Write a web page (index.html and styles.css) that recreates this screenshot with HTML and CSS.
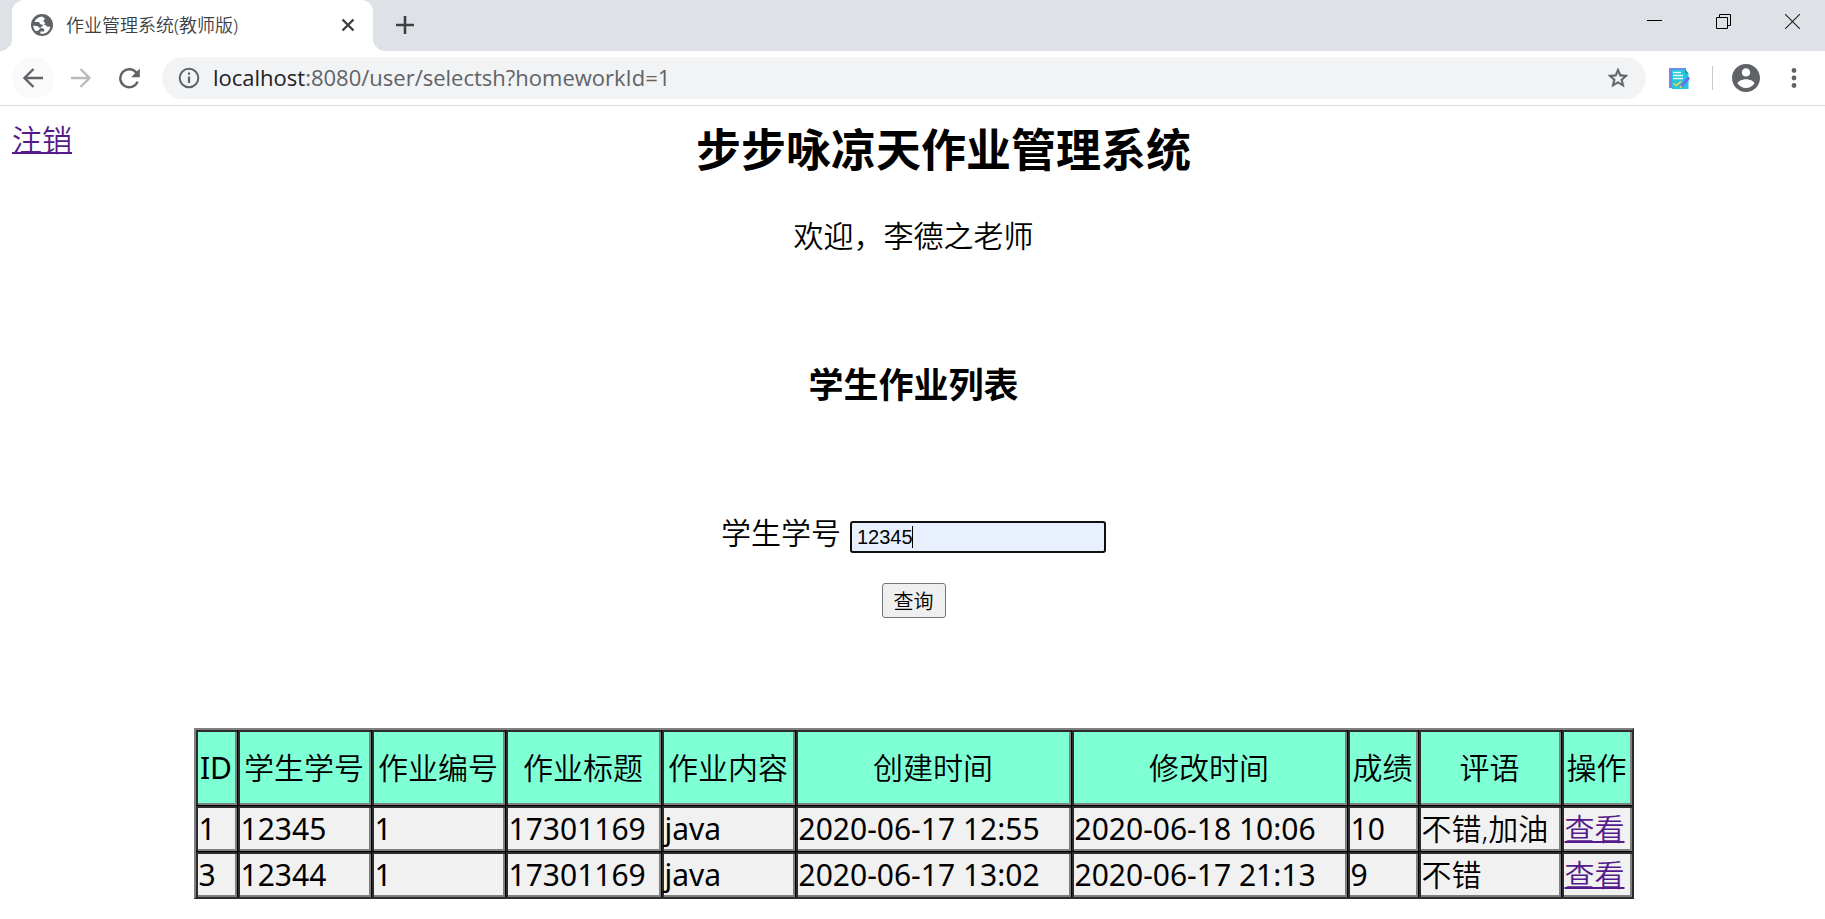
FILE: index.html
```html
<!DOCTYPE html>
<html lang="zh-CN">
<head>
<meta charset="utf-8">
<title>作业管理系统(教师版)</title>
<link rel="stylesheet" href="styles.css">
</head>
<body>
<header class="browser">
  <div class="tabbar">
    <div class="tab">
      <svg class="favicon" viewBox="0 0 24 24" aria-hidden="true"><circle cx="12" cy="12" r="12" fill="#5f6368"/><path d="M12.500 2.600C8 3 4.800 5.400 3.800 8.600h4.400c1.200 0 1.600 3 3.600 3h3.400c1.400 0 1.600 2.400 3 2.400h3c-.400 2-1.400 3.600-2.800 5-1.400 1.300-3.400 2.300-5.400 2.600H10.200v-2.600h3c.800 0 1.300-.600 1.300-1.400 0-1.500-1-2.100-2.300-2.100H9.800C8.600 13.500 6 12.600 2.300 12.800c.300 2 1 3.800 2.200 5.200 1.400 1 2.600.800 3.700-.200 1-.900 1.600-1.500 1.600-2.300l5.800-5.300c0-1.200-2.100-1.200-2.100-2.600 0-1.400 1.500-1.200 1.500-2.500S12.500 3.800 12.500 2.600z" fill="#fff"/></svg>
      <span class="tab-title">作业管理系统(教师版)</span>
      <button class="plain tab-close" aria-label="关闭标签页"><svg width="14" height="14" viewBox="0 0 14 14"><path d="M1.500 1.500l11 11M12.500 1.500l-11 11" stroke="#3c4043" stroke-width="2.400"/></svg></button>
    </div>
    <button class="plain new-tab" aria-label="新标签页"><svg width="18" height="18" viewBox="0 0 18 18"><path d="M9 0v18M0 9h18" stroke="#3c4043" stroke-width="2.600"/></svg></button>
    <div class="window-controls">
      <button class="plain" aria-label="最小化"><svg width="15" height="15" viewBox="0 0 15 15"><path d="M0 6.500h15" stroke="#000"/></svg></button>
      <button class="plain" aria-label="还原"><svg width="15" height="15" viewBox="0 0 15 15"><path d="M.500 3.500h11v11h-11zM3.500 3.500v-3h11v11h-3" fill="none" stroke="#000"/></svg></button>
      <button class="plain" aria-label="关闭"><svg width="15" height="15" viewBox="0 0 15 15"><path d="M0 0l15 15M15 0L0 15" stroke="#222" stroke-width="1.100"/></svg></button>
    </div>
  </div>
  <div class="toolbar">
    <button class="plain nav nav-back" aria-label="后退"><svg width="20" height="20" viewBox="0 0 20 20"><path d="M20 10H1.500M10.500 1L1.500 10l9 9" fill="none" stroke="#5f6368" stroke-width="2.300"/></svg></button>
    <button class="plain nav" aria-label="前进"><svg width="20" height="20" viewBox="0 0 20 20"><path d="M0 10h18.500M9.500 1l9 9-9 9" fill="none" stroke="#bababa" stroke-width="2.300"/></svg></button>
    <button class="plain nav" aria-label="重新加载"><svg width="21" height="21" viewBox="0 0 21 21"><path d="M17.800 5.300A9 9 0 1 0 18.600 13.600" fill="none" stroke="#5f6368" stroke-width="2.400"/><path d="M20.800.600v8.600h-8.600z" fill="#5f6368"/></svg></button>
    <div class="omnibox">
      <svg width="22" height="22" viewBox="0 0 22 22" aria-hidden="true"><circle cx="11" cy="11" r="9.300" fill="none" stroke="#5f6368" stroke-width="2"/><path d="M11 9.500v6.500M11 5.500v2.300" stroke="#5f6368" stroke-width="2.200"/></svg>
      <span class="url"><span class="host">localhost</span>:8080/user/selectsh?homeworkId=1</span>
      <button class="plain" aria-label="收藏"><svg width="22" height="22" viewBox="1 1 22 22"><path d="M22 9.240l-7.190-.620L12 2 9.190 8.630 2 9.240l5.460 4.730L5.820 21 12 17.270 18.180 21l-1.630-7.030L22 9.240zM12 15.400l-3.760 2.270 1-4.280-3.320-2.880 4.380-.380L12 6.100l1.710 4.040 4.380.380-3.320 2.880 1 4.280L12 15.400z" fill="#5f6368" stroke="#5f6368" stroke-width=".500"/></svg></button>
    </div>
    <button class="plain extension" aria-label="扩展程序"><svg width="21" height="21" viewBox="0 0 21 21"><path d="M1 0h16v20H1a1 1 0 0 1-1-1V1a1 1 0 0 1 1-1z" fill="#7b83eb"/><path d="M3 1.500h13l3.500 4V21H3z" fill="#26c6da"/><path d="M16 1.500v4h3.500z" fill="#168fb0"/><path d="M4 4.500h8M4 7.500h10M4 10.500h10" stroke="#e4fcff" stroke-width="1.500"/><path d="M4.500 15.500l2.500 2 5-4" fill="none" stroke="#ffd54f" stroke-width="1.500"/><path d="M12 18.500l8-9" stroke="#6470e8" stroke-width="3"/><path d="M11 20l.500-2.800 2 1.700z" fill="#ffd54f"/></svg></button>
    <span class="divider"></span>
    <button class="plain" aria-label="用户"><svg width="28" height="28" viewBox="2 2 20 20"><path d="M12 2C6.480 2 2 6.480 2 12s4.480 10 10 10 10-4.480 10-10S17.520 2 12 2zm0 3c1.660 0 3 1.340 3 3s-1.340 3-3 3-3-1.340-3-3 1.340-3 3-3zm0 14.200c-2.500 0-4.710-1.280-6-3.220.030-1.990 4-3.080 6-3.080 1.990 0 5.970 1.090 6 3.080-1.290 1.940-3.500 3.220-6 3.220z" fill="#5f6368"/></svg></button>
    <button class="plain menu" aria-label="菜单"><svg width="6" height="20" viewBox="0 0 6 20"><g fill="#5f6368"><circle cx="3" cy="2.500" r="2.400"/><circle cx="3" cy="10" r="2.400"/><circle cx="3" cy="17.500" r="2.400"/></g></svg></button>
  </div>
</header>
<main class="page">
  <a class="logout" href="#">注销</a>
  <h1 class="title">步步咏凉天作业管理系统</h1>
  <p class="welcome">欢迎，李德之老师</p>
  <h2 class="subtitle">学生作业列表</h2>
  <form class="search">
    <div class="field">
      <label for="sid">学生学号</label>
      <span class="input-wrap"><input id="sid" type="text" value="12345"><span class="caret"></span></span>
    </div>
    <button class="submit" type="button">查询</button>
  </form>
  <table class="grid">
    <colgroup><col class="c-id"><col class="c-mid"><col class="c-mid"><col class="c-title"><col class="c-mid"><col class="c-time"><col class="c-time"><col class="c-score"><col class="c-note"><col class="c-op"></colgroup>
    <thead>
      <tr><th class="latin">ID</th><th>学生学号</th><th>作业编号</th><th>作业标题</th><th>作业内容</th><th>创建时间</th><th>修改时间</th><th>成绩</th><th>评语</th><th>操作</th></tr>
    </thead>
    <tbody>
      <tr><td class="latin">1</td><td class="latin">12345</td><td class="latin">1</td><td class="latin">17301169</td><td class="latin">java</td><td class="latin">2020-06-17 12:55</td><td class="latin">2020-06-18 10:06</td><td class="latin">10</td><td>不错,加油</td><td><a href="#">查看</a></td></tr>
      <tr><td class="latin">3</td><td class="latin">12344</td><td class="latin">1</td><td class="latin">17301169</td><td class="latin">java</td><td class="latin">2020-06-17 13:02</td><td class="latin">2020-06-17 21:13</td><td class="latin">9</td><td>不错</td><td><a href="#">查看</a></td></tr>
    </tbody>
  </table>
</main>
</body>
</html>
```
FILE: styles.css
```css
* { box-sizing: border-box; }
body {
  margin: 0;
  background: #fff;
  color: #000;
  font-family: "Noto Sans", "Noto Sans CJK SC", sans-serif;
  font-size: 30px;
  font-weight: 350;
  line-height: 40px;
}
.plain {
  display: flex;
  align-items: center;
  justify-content: center;
  padding: 0;
  border: 0;
  background: none;
}
svg { display: block; flex: none; }

.browser { border-bottom: 1px solid #d9dadc; }
.tabbar {
  display: flex;
  height: 51px;
  padding-left: 12px;
  background: #dee1e6;
}
.tab {
  position: relative;
  display: flex;
  align-items: center;
  width: 361px;
  padding: 0 18px 1px 19px;
  border-radius: 12px 12px 0 0;
  background: #fff;
}
.tab::before,
.tab::after {
  content: "";
  position: absolute;
  bottom: 0;
  width: 12px;
  height: 12px;
}
.tab::before { right: 100%; background: radial-gradient(circle at 0 0, #dee1e6 12px, #fff 12px); }
.tab::after { left: 100%; background: radial-gradient(circle at 100% 0, #dee1e6 12px, #fff 12px); }
.favicon { width: 22px; height: 22px; }
.tab-title {
  flex: 1;
  margin-left: 13px;
  color: #3c4043;
  font-size: 18px;
  line-height: 24px;
}
.new-tab { width: 40px; height: 50px; margin-left: 12px; }
.window-controls {
  display: flex;
  gap: 54px;
  height: 43px;
  margin-left: auto;
  padding-right: 25px;
}
.toolbar {
  display: flex;
  align-items: center;
  height: 54px;
  padding: 0 28px 0 12px;
}
.nav { width: 42px; height: 42px; margin-right: 6px; border-radius: 50%; }
.nav-back { background: #fafafa; }
.omnibox {
  display: flex;
  flex: 1;
  align-items: center;
  height: 42px;
  margin-left: 6px;
  padding: 0 17px 0 16px;
  border-radius: 21px;
  background: #f1f3f4;
}
.url {
  flex: 1;
  margin-left: 13px;
  padding-bottom: 2px;
  color: #5f6368;
  font-family: "Open Sans", sans-serif;
  font-size: 22px;
  font-weight: 400;
  line-height: 30px;
}
.host { color: #202124; }
.extension { margin-left: 23px; }
.divider { width: 1px; height: 24px; margin: 0 19px 0 22px; background: #c8cacd; }
.menu { margin-left: 31px; }

.page { padding: 14px 10px 20px 12px; }
a { color: #551a8b; text-decoration: underline; text-decoration-thickness: 2px; }
.logout { float: left; }
.title {
  margin: 0;
  font-size: 45px;
  font-weight: 700;
  line-height: 60px;
  text-align: center;
}
.welcome { margin: 36px 0 106px; text-align: center; }
.subtitle {
  margin: 0;
  font-size: 35px;
  font-weight: 700;
  line-height: 46px;
  text-align: center;
}
.search {
  display: flex;
  flex-direction: column;
  align-items: center;
  gap: 30px;
  margin: 105px 0 110px;
}
.field { display: flex; align-items: center; gap: 9px; }
.input-wrap { position: relative; display: flex; margin-top: 8px; }
.field input {
  width: 256px;
  height: 32px;
  padding: 0 5px;
  border: 2px solid #101010;
  border-radius: 3px;
  background: #e8f0fe;
  color: #000;
  font: 20px "Liberation Sans", Arial, sans-serif;
  outline: 0;
}
.caret { position: absolute; top: 5px; left: 62px; width: 1px; height: 22px; background: #000; }
.submit {
  height: 35px;
  padding: 0 11px;
  border: 1px solid #767676;
  border-radius: 3px;
  background: #efefef;
  color: #000;
  font: 350 20px/26px "Noto Sans CJK SC", sans-serif;
}

.grid {
  margin: 0 auto;
  border: 2px solid;
  border-color: #808080 #2c2c2c #2c2c2c #808080;
  border-spacing: 0;
  background: #f1f1f1;
}
.grid th, .grid td {
  height: 46px;
  padding: 2px 3px;
  border: 0 solid #000;
  box-shadow: inset 2px 2px #2c2c2c, inset -2px -2px #808080;
  font-weight: 350;
  white-space: nowrap;
}
.grid th { height: 75px; background: #7fffd4; }
.grid td { border-top-width: 1px; }
.grid th + th, .grid td + td { border-left-width: 1px; }
.grid .latin { font-weight: 400; }
.c-id { width: 41px; }
.c-mid { width: 134px; }
.c-title { width: 156px; }
.c-time { width: 276px; }
.c-score { width: 71px; }
.c-note { width: 143px; }
.c-op { width: 71px; }
```
